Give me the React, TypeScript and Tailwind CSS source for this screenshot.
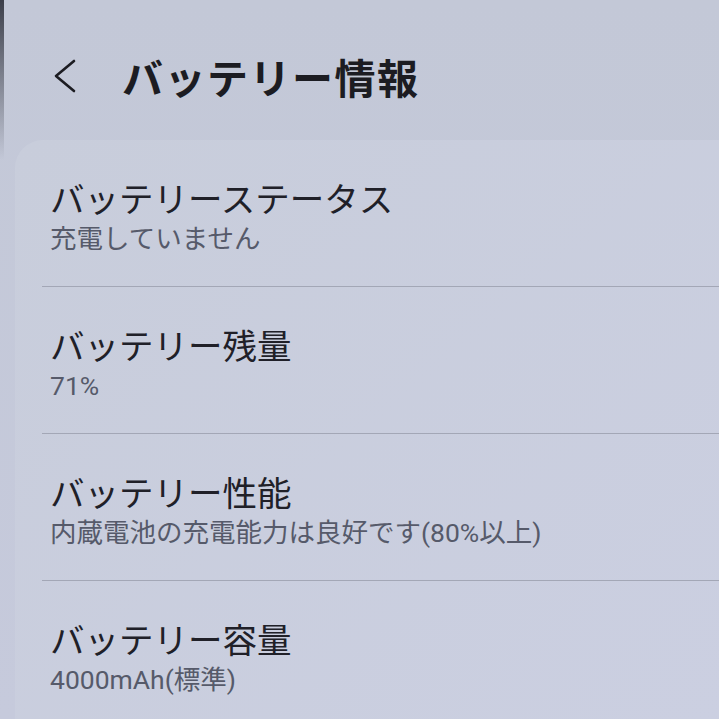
const items = [
  { title: "バッテリーステータス", value: "充電していません" },
  { title: "バッテリー残量", value: "71%" },
  { title: "バッテリー性能", value: "内蔵電池の充電能力は良好です(80%以上)" },
  { title: "バッテリー容量", value: "4000mAh(標準)" },
];

function BackIcon() {
  return (
    <svg width="28" height="40" viewBox="0 0 28 40" fill="none">
      <path
        d="M24 5 L6 20 L24 35"
        stroke="#1c1c22"
        strokeWidth="2.6"
        strokeLinecap="round"
        strokeLinejoin="round"
      />
    </svg>
  );
}

export default function App() {
  return (
    <div className="relative flex h-[719px] w-[719px] flex-col overflow-hidden bg-linear-to-b from-[#c3c8d7] to-[#c6cadc] font-['Noto_Sans_CJK_JP',sans-serif]">
      {/* phone bezel edge */}
      <div className="absolute left-0 top-0 h-[160px] w-[4px] bg-linear-to-b from-[#3c3f4a] to-transparent" />

      <header className="flex h-[140px] shrink-0 items-center pl-[50px] pt-[12px]">
        <BackIcon />
        <h1 className="ml-[44px] text-[41px] font-bold leading-none tracking-[1.5px] text-[#1c1c22]">
          バッテリー情報
        </h1>
      </header>

      <div className="ml-[15px] flex-1 rounded-tl-[28px] bg-linear-to-br from-[#c8cddb] to-[#cbcfe1]">
        {items.map((item, i) => (
          <div key={item.title}>
            {i > 0 && <div className="ml-[27px] h-px bg-[#a3a7b6]" />}
            <div className="pb-[31px] pl-[35px] pt-[37px]">
              <div className="text-[34.5px] leading-[40px] text-[#202028]">
                {item.title}
              </div>
              <div className="mt-[6px] text-[26.5px] leading-[32px] text-[#565a6a] font-['Roboto','Noto_Sans_CJK_JP',sans-serif]">
                {item.value}
              </div>
            </div>
          </div>
        ))}
      </div>
    </div>
  );
}
